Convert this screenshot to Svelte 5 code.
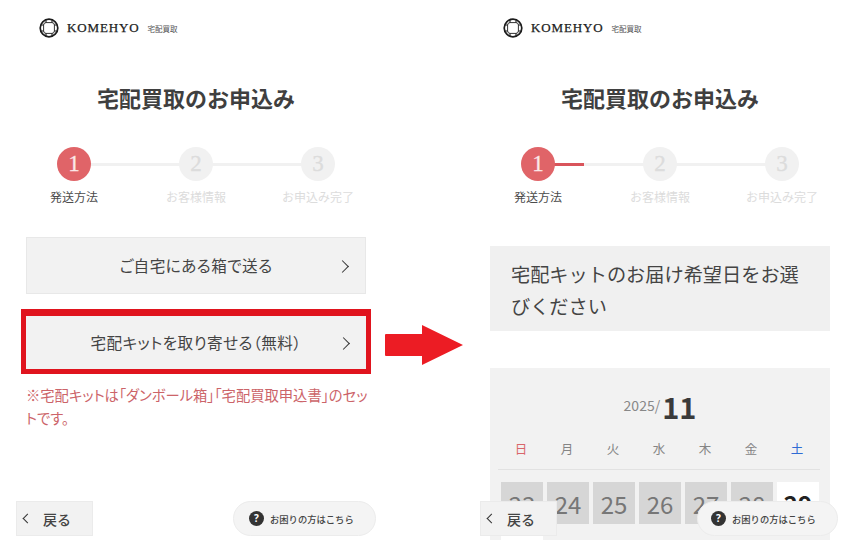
<script>
  const steps = ['発送方法', 'お客様情報', 'お申込み完了'];
  const weekdays = ['日', '月', '火', '水', '木', '金', '土'];
  const dates = [23, 24, 25, 26, 27, 28, 29, 30];
</script>

{#snippet logo()}
  <div class="logo">
    <svg width="20" height="20" viewBox="0 0 20 20" fill="none" stroke="#1c1c1c" aria-hidden="true">
      <circle cx="10" cy="10" r="8.8" stroke-width="1.7" />
      <rect x="4.6" y="4.6" width="10.8" height="10.8" rx="2.5" stroke-width="0.9" />
      <path d="M7 1.8v3M13 1.8v3M7 15.2v3M13 15.2v3M1.8 7h3M1.8 13h3M15.2 7h3M15.2 13h3" stroke-width="1.1" />
    </svg>
    <span class="brand">KOMEHYO</span>
    <span class="sub">宅配買取</span>
  </div>
{/snippet}

{#snippet stepper(progress)}
  <div class="stepper">
    {#each steps as label, i}
      <div class="step" class:active={i === 0} class:joined={i < 2}>
        <div class="circle">{i + 1}</div>
        <div class="label">{label}</div>
      </div>
    {/each}
    {#if progress}<div class="progress"></div>{/if}
  </div>
{/snippet}

{#snippet footer()}
  <div class="back"><span class="chev-left"></span><span>戻る</span></div>
  <div class="help"><span class="q">?</span><span>お困りの方はこちら</span></div>
{/snippet}

<div class="page">
  <section class="phone left">
    {@render logo()}
    <h1>宅配買取のお申込み</h1>
    {@render stepper(false)}
    <div class="choices">
      <div class="choice"><span>ご自宅にある箱で送る</span><i class="chev"></i></div>
      <div class="choice marked"><span>宅配キットを取り寄せる（無料）</span><i class="chev"></i></div>
    </div>
    <p class="note">※宅配キットは「ダンボール箱」「宅配買取申込書」のセッ<br />トです。</p>
    {@render footer()}
  </section>

  <section class="phone right">
    {@render logo()}
    <h1>宅配買取のお申込み</h1>
    {@render stepper(true)}
    <h2>宅配キットのお届け希望日をお選びください</h2>
    <div class="calendar">
      <div class="month"><span class="year">2025/</span><strong>11</strong></div>
      <div class="weekdays">
        {#each weekdays as d, i}
          <span class:sun={i === 0} class:sat={i === 6}>{d}</span>
        {/each}
      </div>
      <div class="dates">
        {#each dates as d}
          <div class="date" class:open={d >= 29}>{d}</div>
        {/each}
      </div>
    </div>
    {@render footer()}
  </section>

  <svg class="arrow" width="78" height="40" viewBox="0 0 78 40" aria-hidden="true">
    <path d="M1 9H37V0L78 20L37 40V31H1Q0 31 0 30V10Q0 9 1 9Z" fill="#ec1c24" />
  </svg>
</div>

<style>
  :global(body) {
    margin: 0;
    background: #fff;
  }
  .page {
    position: relative;
    display: flex;
    width: 850px;
    height: 540px;
    overflow: hidden;
    font-family: "Noto Sans CJK JP", "Noto Sans", sans-serif;
    color: #3c3c3c;
  }
  .phone {
    position: relative;
    box-sizing: border-box;
    flex: none;
    height: 540px;
    padding-left: 26px;
  }
  .left { width: 464px; }
  .right { width: 386px; }

  .logo {
    display: flex;
    align-items: center;
    height: 56px;
    margin-left: 13px;
    color: #1c1c1c;
  }
  .brand {
    margin-left: 8px;
    font: 13px "Liberation Serif", serif;
    letter-spacing: 0.85px;
    -webkit-text-stroke: 0.25px #1c1c1c;
  }
  .sub {
    margin-left: 8px;
    font: 7.5px "Noto Sans CJK JP", serif;
    color: #555;
  }

  h1 {
    width: 340px;
    margin: 26px 0 0;
    font-size: 22px;
    line-height: 30px;
    font-weight: 700;
    text-align: center;
    color: #3f3f3f;
  }

  .stepper {
    position: relative;
    display: grid;
    grid-template-columns: repeat(3, 122px);
    width: 366px;
    margin: 35px 0 0 -13px;
  }
  .step {
    position: relative;
    display: flex;
    flex-direction: column;
    align-items: center;
  }
  .joined::after {
    content: "";
    position: absolute;
    left: 61px;
    top: 16px;
    width: 122px;
    height: 3px;
    background: #f1f1f1;
  }
  .circle {
    position: relative;
    z-index: 1;
    width: 34px;
    height: 34px;
    border-radius: 50%;
    background: #f1f1f1;
    color: #dcdcdc;
    font: 23px/34px "Liberation Serif", serif;
    -webkit-text-stroke: 0.3px currentColor;
    text-align: center;
  }
  .active .circle {
    background: #e06468;
    color: #fbe9e9;
  }
  .label {
    margin-top: 7px;
    font-size: 12px;
    line-height: 18px;
    color: #dcdcdc;
    white-space: nowrap;
  }
  .active .label { color: #4c4c4c; }
  .progress {
    position: absolute;
    z-index: 0;
    left: 61px;
    top: 16px;
    width: 46px;
    height: 3px;
    background: #d9545b;
  }

  .choices {
    display: flex;
    flex-direction: column;
    gap: 20px;
    width: 340px;
    margin-top: 31px;
  }
  .choice {
    position: relative;
    display: flex;
    align-items: center;
    justify-content: center;
    box-sizing: border-box;
    height: 57px;
    padding-bottom: 1px;
    background: #f2f2f2;
    border: 1px solid #e8e8e8;
    font-size: 15.6px;
    color: #444;
    font-feature-settings: "palt";
    letter-spacing: 0.45px;
  }
  .marked {
    height: 55px;
    border: 0;
    border-top: 2px solid #e0141e;
    outline: 5px solid #e0141e;
  }
  .chev {
    position: absolute;
    right: 18px;
    top: 50%;
    width: 8px;
    height: 8px;
    margin-top: -4px;
    border-top: 1.8px solid #333;
    border-right: 1.8px solid #333;
    transform: rotate(45deg);
  }

  .note {
    width: 350px;
    margin: 14px 0 0;
    font-size: 14.3px;
    line-height: 23px;
    color: #cc6469;
    font-feature-settings: "palt";
    white-space: nowrap;
  }

  h2 {
    box-sizing: border-box;
    width: 340px;
    margin: 40px 0 0;
    padding: 12px 20px 9px 21px;
    background: #f0f0f0;
    font-size: 19.2px;
    line-height: 32px;
    font-weight: 400;
    color: #444;
  }

  .calendar {
    box-sizing: border-box;
    width: 340px;
    height: 172px;
    margin-top: 37px;
    padding: 15px 11px 0;
    background: #f2f2f2;
  }
  .month {
    display: flex;
    align-items: center;
    justify-content: center;
    height: 44px;
    color: #888;
  }
  .year {
    font-size: 14px;
    line-height: 44px;
    margin-right: 2px;
  }
  .month strong {
    font: bold 29px/44px "Noto Sans CJK JP", sans-serif;
    color: #3a3a3a;
    margin-top: 1px;
  }
  .weekdays {
    display: grid;
    grid-template-columns: repeat(7, 46px);
    height: 43px;
    margin: 0 0 0 -3px;
    padding-top: 5px;
    box-sizing: border-box;
    border-bottom: 1px solid #e2e2e2;
    width: 322px;
    font-size: 12.5px;
    line-height: 33px;
    text-align: center;
    color: #858585;
  }
  .sun { color: #d9666b; }
  .sat { color: #2f6bd4; }
  .dates {
    display: grid;
    grid-template-columns: repeat(7, 42px);
    grid-auto-rows: 42px;
    gap: 4px;
    margin-top: 12px;
  }
  .date {
    display: flex;
    align-items: center;
    justify-content: center;
    background: #d6d6d6;
    font: 24px "Noto Sans CJK JP", sans-serif;
    color: #777;
  }
  .open {
    background: #fff;
    font-weight: 700;
    color: #222;
  }

  .back, .help {
    position: absolute;
    z-index: 2;
    top: 501px;
    box-sizing: border-box;
    height: 35px;
    display: flex;
    align-items: center;
  }
  .back {
    left: 16px;
    width: 77px;
    padding-left: 5px;
    gap: 12px;
    background: #f2f2f2;
    border: 1px solid #ebebeb;
    font-size: 14px;
    font-weight: 500;
    color: #444;
  }
  .chev-left {
    width: 6px;
    height: 6px;
    border-left: 1.6px solid #333;
    border-bottom: 1.6px solid #333;
    transform: rotate(45deg);
    margin-left: 2px;
  }
  .help {
    left: 233px;
    width: 143px;
    padding-left: 15px;
    gap: 6px;
    border-radius: 18px;
    background: #f4f4f4;
    border: 1px solid #ececec;
    font-size: 9.3px;
    font-weight: 500;
    color: #444;
    white-space: nowrap;
  }
  .right .help {
    left: 233px;
    width: 141px;
    padding-left: 13px;
  }
  .q {
    width: 15px;
    height: 15px;
    border-radius: 50%;
    background: #333;
    color: #fff;
    font: bold 10px/15px "Noto Sans", sans-serif;
    text-align: center;
  }
  .arrow {
    position: absolute;
    left: 385px;
    top: 325px;
  }
</style>
